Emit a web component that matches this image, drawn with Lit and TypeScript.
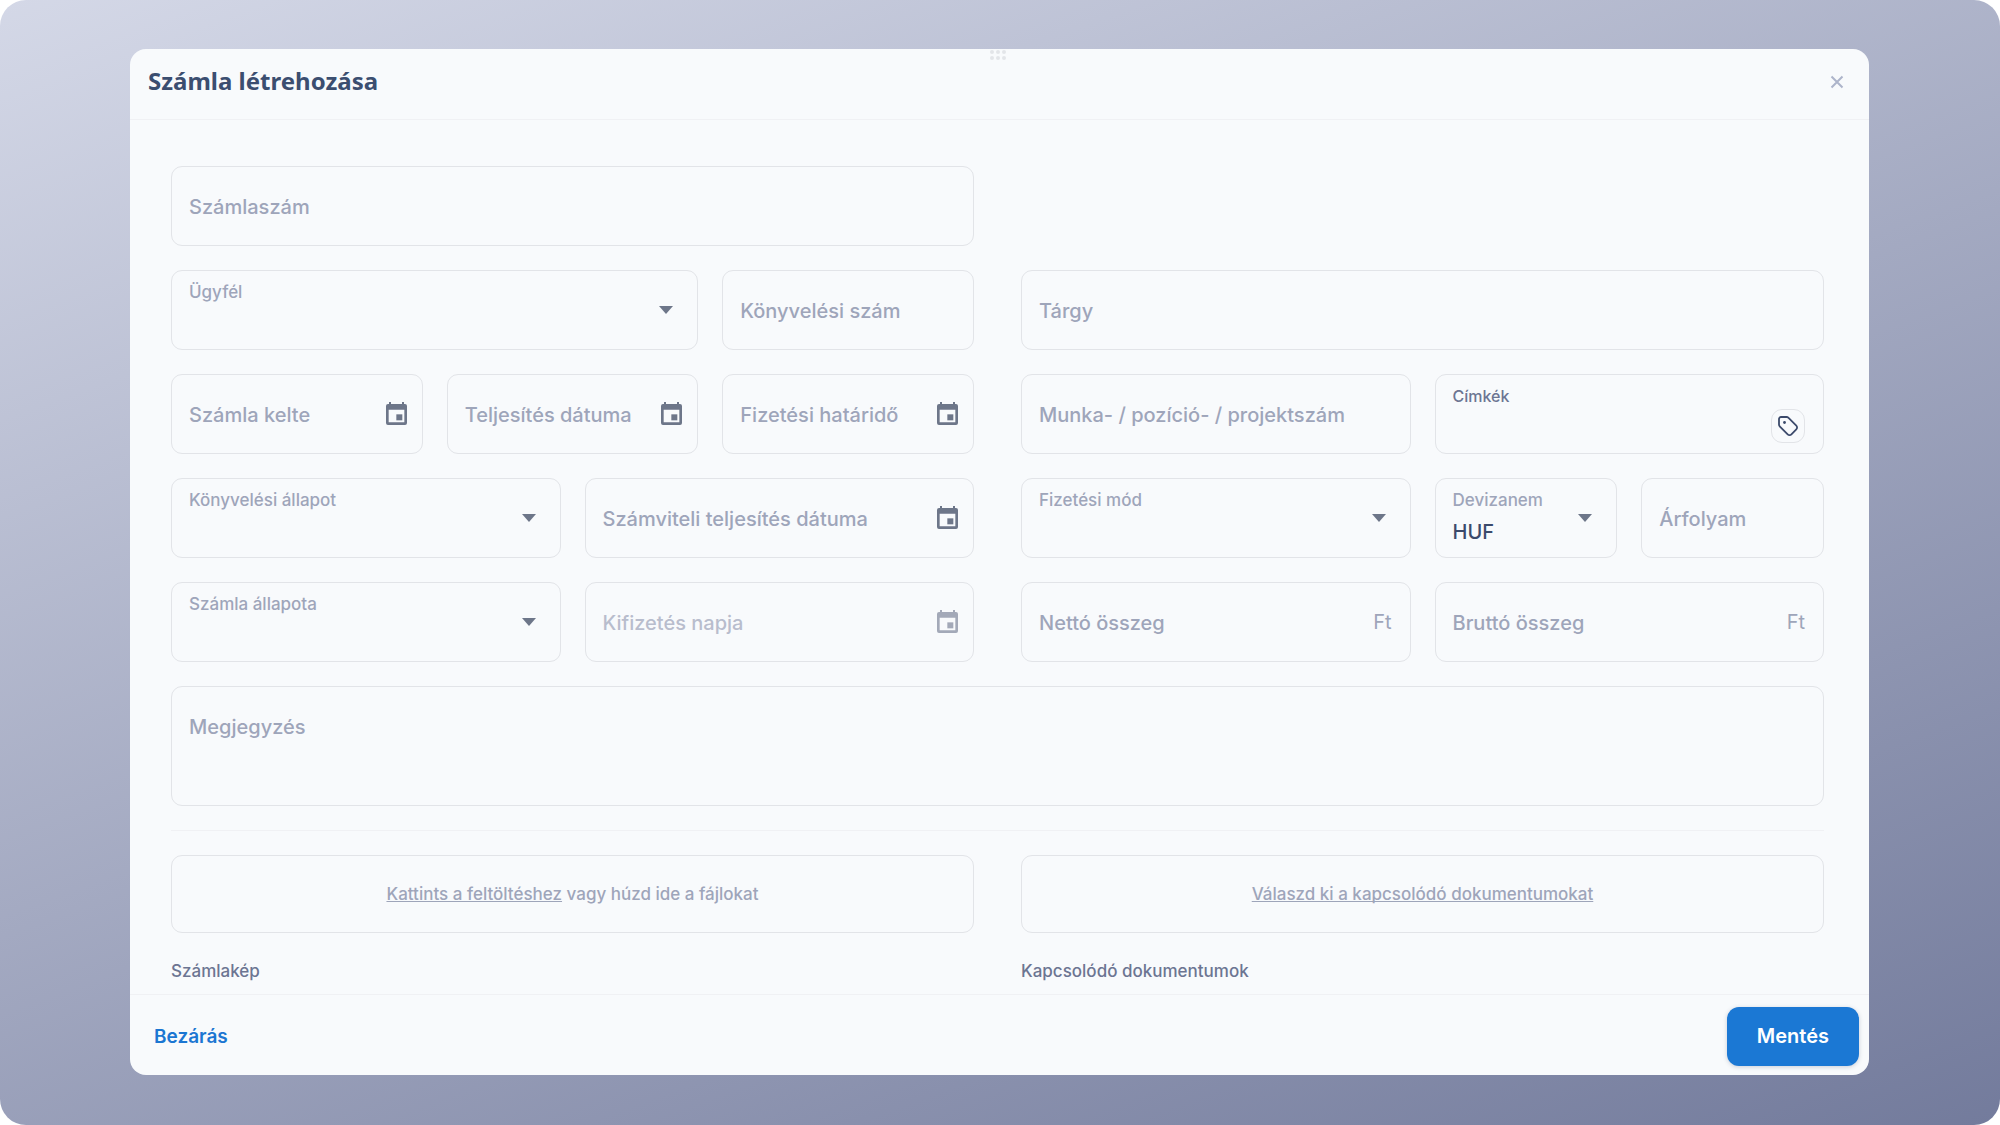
import { LitElement, css, html, nothing, svg } from 'lit'
import { customElement, property } from 'lit/decorators.js'
import { classMap } from 'lit/directives/class-map.js'

const calendarIcon = html`
  <svg class="calendar" viewBox="0 0 63 69" aria-hidden="true">
    <path
      fill-rule="evenodd"
      d="M9 0h6v6h33V0h6v6h3a6 6 0 0 1 6 6v51a6 6 0 0 1-6 6H6a6 6 0 0 1-6-6V12a6 6 0 0 1 6-6h3zM8 23v38h47V23z"
    />
    <path d="M31 37h18v18H31z" />
  </svg>
`

const tagIcon = html`
  <svg class="tag" viewBox="0 0 24 24" aria-hidden="true">
    <path
      d="M3 5v5.600a2.400 2.400 0 0 0 .7 1.700l8 8a2.600 2.600 0 0 0 3.700 0l4.900-4.900a2.600 2.600 0 0 0 0-3.700l-8-8A2.400 2.400 0 0 0 10.600 3H5a2 2 0 0 0-2 2z"
    />
    <circle cx="8.500" cy="8.500" r="1.400" />
  </svg>
`

const closeIcon = html`
  <svg class="close-icon" viewBox="0 0 14 14" aria-hidden="true">
    <path d="M1.500 1.500l11 11M12.500 1.500l-11 11" />
  </svg>
`

const gripDots = [3, 9, 15].map(
  (x) => svg`<circle cx=${x} cy="3" r="2" /><circle cx=${x} cy="9" r="2" />`
)

@customElement('form-field')
export class FormField extends LitElement {
  @property() label = ''
  @property() kind = 'text'
  @property() value = ''
  @property() suffix = ''
  @property({ type: Boolean }) disabled = false

  static styles = css`
    :host {
      display: block;
      min-width: 0;
    }

    .field {
      display: grid;
      grid-template-columns: minmax(0, 1fr) auto;
      align-items: center;
      box-sizing: border-box;
      min-height: 80px;
      border: 1px solid #e2e4e8;
      border-radius: 11px;
    }

    .area {
      min-height: 120px;
    }

    label {
      grid-area: 1 / 1;
      padding: 2px 0 0 17px;
      color: #9ea5ba;
      font-size: 20px;
      font-weight: 500;
      line-height: 28px;
      white-space: nowrap;
      pointer-events: none;
    }

    .area label {
      align-self: start;
      padding-top: 26px;
    }

    .select label,
    .tags label {
      align-self: start;
      padding-top: 9px;
      font-size: 17px;
      line-height: 24px;
    }

    .tags label {
      color: #6c7592;
      font-size: 16px;
    }

    input,
    textarea,
    select {
      grid-area: 1 / 1 / 2 / 3;
      align-self: stretch;
      width: 100%;
      box-sizing: border-box;
      margin: 0;
      padding: 0 17px;
      border: 0;
      outline: 0;
      border-radius: 11px;
      background: transparent;
      color: #3b4a6b;
      font: 500 20px/28px Inter, sans-serif;
      appearance: none;
      resize: none;
    }

    select {
      padding-top: 28px;
    }

    textarea {
      padding-top: 24px;
    }

    .arrow {
      grid-area: 1 / 2;
      width: 14px;
      height: 8px;
      margin-right: 24px;
      fill: #6d7689;
      pointer-events: none;
    }

    .suffix {
      grid-area: 1 / 2;
      padding-right: 18px;
      color: #9ea5ba;
      font-size: 20px;
      line-height: 28px;
    }

    button {
      grid-area: 1 / 2;
      display: flex;
      margin: 0;
      padding: 0;
      border: 0;
      background: transparent;
      cursor: pointer;
    }

    .date button {
      margin-right: 15px;
      padding-bottom: 2px;
    }

    .calendar {
      width: 21px;
      height: 23px;
      fill: #6d7689;
    }

    .disabled label {
      color: #b8bdcd;
    }

    .disabled .calendar {
      fill: #a3a9b8;
    }

    .tags button {
      align-self: end;
      margin: 0 18px 10px 0;
      padding: 4px;
      border: 1px solid #e2e4e8;
      border-radius: 11px;
    }

    .tag {
      width: 24px;
      height: 24px;
      fill: none;
      stroke: #3b4a6b;
      stroke-width: 1.8;
      stroke-linejoin: round;
    }

    .tag circle {
      fill: #3b4a6b;
      stroke: none;
    }
  `

  private renderControl() {
    if (this.kind === 'select') {
      return html`
        <select id="control">
          <option>${this.value}</option>
        </select>
        <svg class="arrow" viewBox="0 0 14 8" aria-hidden="true"><path d="M0 0h14L7 8z" /></svg>
      `
    }
    if (this.kind === 'area') {
      return html`<textarea id="control"></textarea>`
    }
    return html`
      <input id="control" type="text" .value=${this.value} ?disabled=${this.disabled} />
      ${this.kind === 'date'
        ? html`<button type="button" aria-label="Naptár" ?disabled=${this.disabled}>${calendarIcon}</button>`
        : nothing}
      ${this.kind === 'tags'
        ? html`<button type="button" aria-label="Címke hozzáadása">${tagIcon}</button>`
        : nothing}
      ${this.suffix ? html`<span class="suffix">${this.suffix}</span>` : nothing}
    `
  }

  render() {
    return html`
      <div class=${classMap({ field: true, [this.kind]: true, disabled: this.disabled })}>
        ${this.renderControl()}
        <label for="control">${this.label}</label>
      </div>
    `
  }
}

@customElement('app-root')
export class AppRoot extends LitElement {
  static styles = css`
    :host {
      display: block;
      background: #fff;
      font-family: Inter, sans-serif;
    }

    .backdrop {
      display: flex;
      box-sizing: border-box;
      min-height: 100vh;
      padding: 49px 131px 50px 130px;
      border-radius: 26px;
      background: linear-gradient(160deg, #d4d8e7, #737b9c);
    }

    .dialog {
      position: relative;
      display: flex;
      flex-direction: column;
      flex: 1;
      min-width: 0;
      border-radius: 16px;
      background: #f8fafc;
    }

    .grip {
      position: absolute;
      top: 0;
      left: 50%;
      width: 18px;
      height: 12px;
      margin-left: -11px;
      fill: #e3e5e9;
    }

    header {
      display: flex;
      align-items: center;
      justify-content: space-between;
      min-height: 36px;
      padding: 14px 25px 20px 18px;
      border-bottom: 1px solid #f0f1f4;
    }

    h1 {
      margin: 0;
      color: #3b4e70;
      font: 700 24px/34px 'Noto Sans', sans-serif;
    }

    button {
      margin: 0;
      border: 0;
      background: none;
      font: 600 20px/28px Inter, sans-serif;
      cursor: pointer;
    }

    .close {
      display: flex;
      padding: 2px 0 0;
    }

    .close-icon {
      width: 14px;
      height: 14px;
      fill: none;
      stroke: #adb4ca;
      stroke-width: 2;
    }

    form {
      display: flex;
      flex-direction: column;
      flex: 1;
    }

    .body {
      display: flex;
      flex-direction: column;
      gap: 24px;
      flex: 1;
      padding: 46px 45px 8px 41px;
    }

    .columns {
      display: grid;
      grid-template-columns: 1fr 1fr;
      gap: 24px 47px;
    }

    .group {
      display: grid;
      grid-auto-flow: column;
      grid-auto-columns: minmax(0, 1fr);
      gap: 24px;
    }

    .thirds {
      grid-template-columns: repeat(3, minmax(0, 1fr));
    }

    .wide {
      grid-column: span 2;
    }

    hr {
      width: 100%;
      margin: 0;
      border: 0;
      border-top: 1px solid #f0f1f4;
    }

    .upload {
      box-sizing: border-box;
      width: 100%;
      min-height: 78px;
      border: 1px solid #e2e4e8;
      border-radius: 11px;
      color: #9ea5ba;
      font-size: 17px;
      font-weight: 500;
      line-height: 24px;
    }

    .upload u {
      text-decoration-skip-ink: none;
    }

    h2 {
      margin: 26px 0 0;
      color: #6c7592;
      font-size: 17px;
      font-weight: 500;
      line-height: 24px;
    }

    footer {
      display: flex;
      align-items: center;
      justify-content: space-between;
      padding: 12px 10px 9px 16px;
      border-top: 1px solid #f0f1f4;
    }

    .cancel {
      padding: 0 8px;
      color: #1b76d2;
      font-size: 19px;
    }

    .save {
      padding: 15px 30px 16px;
      border-radius: 12px;
      background: #1b78d4;
      box-shadow: 0 1px 4px rgb(60 74 107 / 25%);
      color: #fff;
    }

    @media (max-width: 1000px) {
      .backdrop {
        padding: 24px;
      }

      .columns {
        grid-template-columns: 1fr;
      }
    }
  `

  render() {
    return html`
      <div class="backdrop">
        <section class="dialog" role="dialog" aria-labelledby="title">
          <svg class="grip" viewBox="0 0 18 12" aria-hidden="true">${gripDots}</svg>
          <header>
            <h1 id="title">Számla létrehozása</h1>
            <button class="close" type="button" aria-label="Bezárás">${closeIcon}</button>
          </header>
          <form>
            <div class="body">
              <div class="columns">
                <form-field label="Számlaszám"></form-field>
              </div>
              <div class="columns">
                <div class="group thirds">
                  <form-field class="wide" kind="select" label="Ügyfél"></form-field>
                  <form-field label="Könyvelési szám"></form-field>
                </div>
                <form-field label="Tárgy"></form-field>
              </div>
              <div class="columns">
                <div class="group">
                  <form-field kind="date" label="Számla kelte"></form-field>
                  <form-field kind="date" label="Teljesítés dátuma"></form-field>
                  <form-field kind="date" label="Fizetési határidő"></form-field>
                </div>
                <div class="group">
                  <form-field label="Munka- / pozíció- / projektszám"></form-field>
                  <form-field kind="tags" label="Címkék"></form-field>
                </div>
              </div>
              <div class="columns">
                <div class="group">
                  <form-field kind="select" label="Könyvelési állapot"></form-field>
                  <form-field kind="date" label="Számviteli teljesítés dátuma"></form-field>
                </div>
                <div class="group">
                  <form-field kind="select" label="Fizetési mód"></form-field>
                  <div class="group">
                    <form-field kind="select" label="Devizanem" value="HUF"></form-field>
                    <form-field label="Árfolyam"></form-field>
                  </div>
                </div>
              </div>
              <div class="columns">
                <div class="group">
                  <form-field kind="select" label="Számla állapota"></form-field>
                  <form-field kind="date" label="Kifizetés napja" disabled></form-field>
                </div>
                <div class="group">
                  <form-field label="Nettó összeg" suffix="Ft"></form-field>
                  <form-field label="Bruttó összeg" suffix="Ft"></form-field>
                </div>
              </div>
              <form-field kind="area" label="Megjegyzés"></form-field>
              <hr />
              <div class="columns">
                <div>
                  <button class="upload" type="button"><u>Kattints a feltöltéshez</u> vagy húzd ide a fájlokat</button>
                  <h2>Számlakép</h2>
                </div>
                <div>
                  <button class="upload" type="button"><u>Válaszd ki a kapcsolódó dokumentumokat</u></button>
                  <h2>Kapcsolódó dokumentumok</h2>
                </div>
              </div>
            </div>
            <footer>
              <button class="cancel" type="button">Bezárás</button>
              <button class="save" type="button">Mentés</button>
            </footer>
          </form>
        </section>
      </div>
    `
  }
}
